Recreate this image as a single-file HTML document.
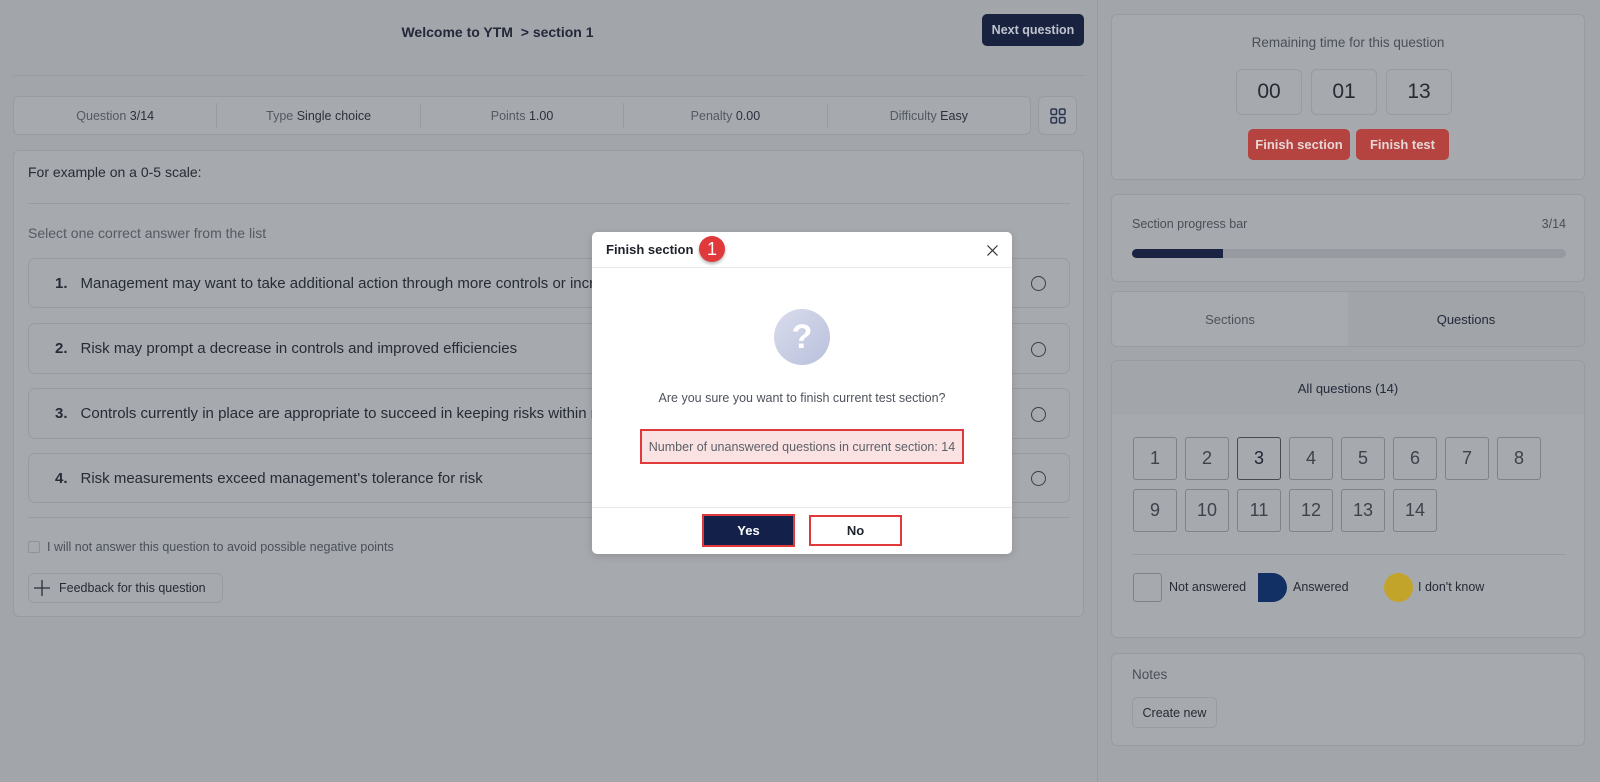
<!DOCTYPE html>
<html><head><meta charset="utf-8">
<style>
*{box-sizing:border-box;margin:0;padding:0}
body{width:1600px;height:782px;background:#a2a5aa;font-family:"Liberation Sans",sans-serif;color:#2b303a;position:relative;overflow:hidden}
.a{position:absolute}
.card{position:absolute;background:#a6a9ae;border:1px solid #989ba1;border-radius:6px}
.c{display:flex;align-items:center;justify-content:center}
.btnred{background:#b5433f;color:#e8d6d6;font-weight:bold;font-size:13px;border-radius:5px}
.qb{position:absolute;width:44px;height:43px;border:1px solid #7d8188;border-radius:3px;font-size:18px;color:#3d424b;display:flex;align-items:center;justify-content:center}
.opt{position:absolute;left:28px;width:1042px;border:1px solid #989ba1;border-radius:7px;font-size:15px;color:#262b35;display:flex;align-items:center;padding-left:26px}
.opt b{margin-right:13px}
.radio{position:absolute;right:23px;top:50%;margin-top:-7px;width:15px;height:15px;border:1.3px solid #3b3f47;border-radius:50%}
</style></head><body>
<div class="a" style="left:0;top:24px;width:995px;text-align:center;font-size:14px;font-weight:bold;color:#23283a">Welcome to YTM &nbsp;&gt; section 1</div>
<div class="a c" style="left:982px;top:14px;width:102px;height:32px;background:#19233f;border-radius:5px;color:#bfc4d0;font-size:12.5px;font-weight:bold">Next question</div>
<div class="a" style="left:13px;top:75px;width:1071px;height:1px;background:#979aa0"></div>
<div class="card" style="left:13px;top:96px;width:1018px;height:39px;display:flex;font-size:12.5px;color:#535862">
<div class="c" style="flex:1;border-right:1px solid #989ba1;margin:6px 0">Question&nbsp;<b style="color:#2b303a;font-weight:normal">3/14</b></div>
<div class="c" style="flex:1;border-right:1px solid #989ba1;margin:6px 0">Type&nbsp;<span style="color:#2b303a">Single choice</span></div>
<div class="c" style="flex:1;border-right:1px solid #989ba1;margin:6px 0">Points&nbsp;<span style="color:#2b303a">1.00</span></div>
<div class="c" style="flex:1;border-right:1px solid #989ba1;margin:6px 0">Penalty&nbsp;<span style="color:#2b303a">0.00</span></div>
<div class="c" style="flex:1;margin:6px 0">Difficulty&nbsp;<span style="color:#2b303a">Easy</span></div>
</div>
<div class="card c" style="left:1038px;top:96px;width:39px;height:39px">
<svg width="16" height="16" viewBox="0 0 16 16" fill="none" stroke="#2a3550" stroke-width="1.5"><rect x="1" y="1" width="5.5" height="5.5" rx="1.3"/><rect x="9.5" y="1" width="5.5" height="5.5" rx="1.3"/><rect x="1" y="9.5" width="5.5" height="5.5" rx="1.3"/><rect x="9.5" y="9.5" width="5.5" height="5.5" rx="1.3"/></svg></div>
<div class="card" style="left:13px;top:150px;width:1071px;height:467px"></div>
<div class="a" style="left:28px;top:164px;font-size:14px;color:#262b35">For example on a 0-5 scale:</div>
<div class="a" style="left:28px;top:203px;width:1042px;height:1px;background:#989ba1"></div>
<div class="a" style="left:28px;top:225px;font-size:14px;color:#555a63">Select one correct answer from the list</div>
<div class="opt" style="top:258px;height:50px"><b>1.</b>Management may want to take additional action through more controls or increase<div class="radio"></div></div>
<div class="opt" style="top:323px;height:51px"><b>2.</b>Risk may prompt a decrease in controls and improved efficiencies<div class="radio"></div></div>
<div class="opt" style="top:388px;height:51px"><b>3.</b>Controls currently in place are appropriate to succeed in keeping risks within management<div class="radio"></div></div>
<div class="opt" style="top:453px;height:50px"><b>4.</b>Risk measurements exceed management's tolerance for risk<div class="radio"></div></div>
<div class="a" style="left:28px;top:517px;width:1042px;height:1px;background:#989ba1"></div>
<div class="a" style="left:28px;top:541px;width:12px;height:12px;border:1px solid #8f9298;border-radius:2px"></div>
<div class="a" style="left:47px;top:540px;font-size:12.5px;color:#4a4f58">I will not answer this question to avoid possible negative points</div>
<div class="a" style="left:28px;top:573px;width:195px;height:30px;border:1px solid #989ba1;border-radius:6px;font-size:12.5px;color:#262b35;display:flex;align-items:center;padding-left:30px">Feedback for this question</div>
<svg class="a" style="left:34px;top:580px" width="16" height="16"><path d="M8 0V16M0 8H16" stroke="#2b303a" stroke-width="1.3"/></svg>
<div class="a" style="left:1097px;top:0;width:1px;height:782px;background:#979aa0"></div>
<div class="card" style="left:1111px;top:14px;width:474px;height:166px"></div>
<div class="a" style="left:1111px;top:35px;width:474px;text-align:center;font-size:13.5px;color:#4a4f58">Remaining time for this question</div>
<div class="card c" style="left:1236px;top:69px;width:66px;height:46px;font-size:21px;color:#262b35">00</div>
<div class="card c" style="left:1311px;top:69px;width:66px;height:46px;font-size:21px;color:#262b35">01</div>
<div class="card c" style="left:1386px;top:69px;width:66px;height:46px;font-size:21px;color:#262b35">13</div>
<div class="a c btnred" style="left:1248px;top:129px;width:102px;height:31px">Finish section</div>
<div class="a c btnred" style="left:1356px;top:129px;width:93px;height:31px">Finish test</div>
<div class="card" style="left:1111px;top:194px;width:474px;height:88px"></div>
<div class="a" style="left:1132px;top:217px;font-size:12.5px;color:#4a4f58">Section progress bar</div>
<div class="a" style="left:1500px;top:217px;width:66px;text-align:right;font-size:12.5px;color:#4a4f58">3/14</div>
<div class="a" style="left:1132px;top:249px;width:434px;height:9px;background:#979aa1;border-radius:5px;overflow:hidden"><div style="width:91px;height:9px;background:#1a2442"></div></div>
<div class="card" style="left:1111px;top:291px;width:474px;height:56px;display:flex;overflow:hidden">
<div class="c" style="flex:1;font-size:13px;color:#4e535c;background:#a7aaaf">Sections</div>
<div class="c" style="flex:1;font-size:13px;color:#232a3a;background:#a1a4a9">Questions</div></div>
<div class="card" style="left:1111px;top:360px;width:474px;height:278px"></div>
<div class="a c" style="left:1112px;top:361px;width:472px;height:54px;background:#a2a5aa;font-size:13px;color:#232a3a;border-radius:6px 6px 0 0">All questions (14)</div>
<div class="qb" style="left:1133px;top:437px">1</div>
<div class="qb" style="left:1185px;top:437px">2</div>
<div class="qb" style="left:1237px;top:437px;border-color:#454a55;color:#1f2533">3</div>
<div class="qb" style="left:1289px;top:437px">4</div>
<div class="qb" style="left:1341px;top:437px">5</div>
<div class="qb" style="left:1393px;top:437px">6</div>
<div class="qb" style="left:1445px;top:437px">7</div>
<div class="qb" style="left:1497px;top:437px">8</div>
<div class="qb" style="left:1133px;top:489px">9</div>
<div class="qb" style="left:1185px;top:489px">10</div>
<div class="qb" style="left:1237px;top:489px">11</div>
<div class="qb" style="left:1289px;top:489px">12</div>
<div class="qb" style="left:1341px;top:489px">13</div>
<div class="qb" style="left:1393px;top:489px">14</div>
<div class="a" style="left:1132px;top:554px;width:434px;height:1px;background:#979aa0"></div>
<div class="a" style="left:1133px;top:573px;width:29px;height:29px;border:1px solid #7d8188;border-radius:3px"></div>
<div class="a" style="left:1169px;top:580px;font-size:12.5px;color:#262b35">Not answered</div>
<div class="a" style="left:1258px;top:573px;width:29px;height:29px;background:#123063;border-radius:0 15px 15px 0"></div>
<div class="a" style="left:1293px;top:580px;font-size:12.5px;color:#262b35">Answered</div>
<div class="a" style="left:1384px;top:573px;width:29px;height:29px;background:#c2a42b;border-radius:50%"></div>
<div class="a" style="left:1418px;top:580px;font-size:12.5px;color:#262b35">I don't know</div>
<div class="card" style="left:1111px;top:653px;width:474px;height:93px"></div>
<div class="a" style="left:1132px;top:667px;font-size:13.5px;color:#4a4f58">Notes</div>
<div class="a c" style="left:1132px;top:697px;width:85px;height:31px;border:1px solid #989ba1;border-radius:5px;font-size:12.5px;color:#262b35">Create new</div>
<div class="a" style="left:592px;top:232px;width:420px;height:322px;background:#fff;border-radius:5px;box-shadow:0 2px 8px rgba(0,0,0,.15)"></div>
<div class="a" style="left:606px;top:242px;font-size:13px;font-weight:bold;color:#1e222b">Finish section</div>
<div class="a c" style="left:699px;top:236px;width:26px;height:26px;border-radius:50%;background:#e0393c;color:#fff;font-size:18px;box-shadow:0 2px 3px rgba(0,0,0,.3)">1</div>
<svg class="a" style="left:987px;top:245px" width="11" height="11"><path d="M0.5 0.5L10.5 10.5M10.5 0.5L0.5 10.5" stroke="#333" stroke-width="1.2"/></svg>
<div class="a" style="left:592px;top:267px;width:420px;height:1px;background:#e8e8ec"></div>
<div class="a c" style="left:774px;top:309px;width:56px;height:56px;border-radius:50%;background:linear-gradient(135deg,#d9dcec,#b9c0dc);color:#fff;font-size:34px;font-weight:bold">?</div>
<div class="a" style="left:592px;top:391px;width:420px;text-align:center;font-size:12.5px;color:#4e535c">Are you sure you want to finish current test section?</div>
<div class="a c" style="left:640px;top:429px;width:324px;height:35px;border:2px solid #e0393c;background:#fbe2e2;font-size:12.5px;color:#5a5f68">Number of unanswered questions in current section: 14</div>
<div class="a" style="left:592px;top:507px;width:420px;height:1px;background:#e8e8ec"></div>
<div class="a c" style="left:702px;top:514px;width:93px;height:33px;border:2px solid #e0393c;background:#12204a;color:#fff;font-size:13px;font-weight:bold">Yes</div>
<div class="a c" style="left:809px;top:515px;width:93px;height:31px;border:2px solid #e0393c;background:#fff;color:#1e222b;font-size:13px;font-weight:bold">No</div>
</body></html>
